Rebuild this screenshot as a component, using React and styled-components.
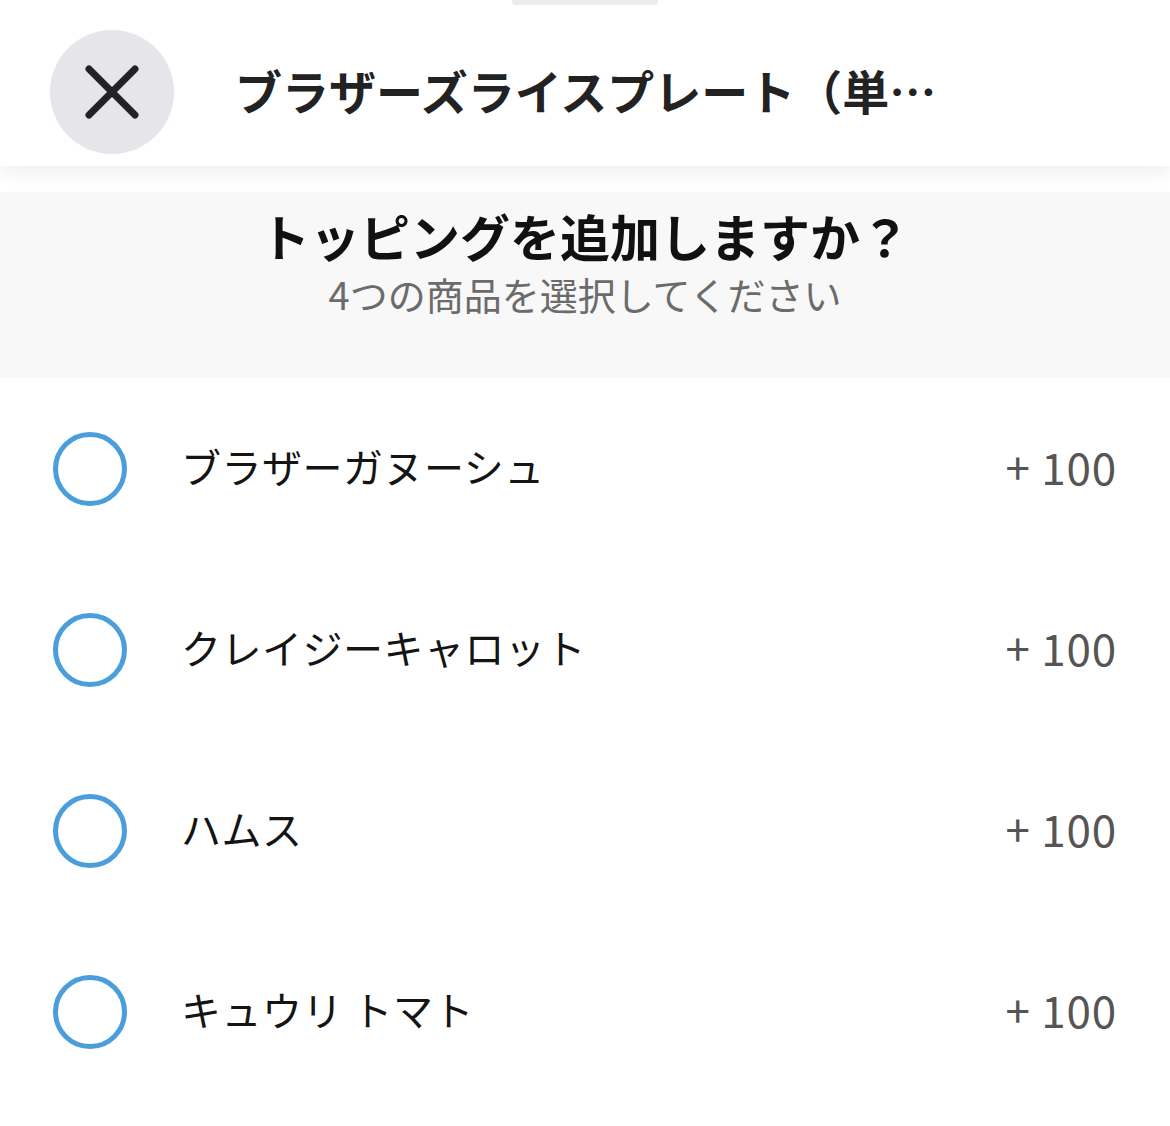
import React from 'react';
import styled, { createGlobalStyle } from 'styled-components';

const GlobalStyle = createGlobalStyle`
  html, body {
    margin: 0;
    padding: 0;
    background: #ffffff;
  }
  body {
    font-family: "Noto Sans CJK JP", "Noto Sans", sans-serif;
    -webkit-font-smoothing: antialiased;
  }
`;

const TOPPINGS = [
  { name: 'ブラザーガヌーシュ', price: 100 },
  { name: 'クレイジーキャロット', price: 100 },
  { name: 'ハムス', price: 100 },
  { name: 'キュウリ トマト', price: 100 },
];

const Sheet = styled.div`
  width: 1170px;
  height: 1126px;
  overflow: hidden;
  background: #ffffff;
`;

const Header = styled.header`
  position: relative;
  z-index: 2;
  display: flex;
  flex-direction: column;
  background: #ffffff;
  height: 166px;
  box-shadow: 0 6px 18px rgba(0, 0, 0, 0.07);
`;

const Handle = styled.div`
  align-self: center;
  width: 146px;
  height: 5px;
  border-radius: 0 0 4px 4px;
  background: #ececee;
`;

const HeaderRow = styled.div`
  display: flex;
  align-items: center;
  gap: 61px;
  padding: 25px 50px 0;
`;

const CloseButton = styled.button`
  flex: none;
  width: 124px;
  height: 124px;
  border: none;
  border-radius: 50%;
  background: #e5e5ea;
  display: flex;
  align-items: center;
  justify-content: center;
  padding: 0;
  cursor: pointer;
`;

const Title = styled.h1`
  margin: 0 0 6px;
  font-size: 47px;
  font-weight: 700;
  color: #222222;
  white-space: nowrap;
`;

const Spacer = styled.div`
  height: 26px;
`;

const Prompt = styled.section`
  display: flex;
  flex-direction: column;
  align-items: center;
  background: #f8f8f8;
  height: 186px;
  box-sizing: border-box;
  padding-top: 14px;
`;

const PromptTitle = styled.h2`
  margin: 0;
  font-size: 50px;
  line-height: 58px;
  font-weight: 700;
  color: #111111;
`;

const PromptSub = styled.p`
  margin: 7px 0 0;
  font-size: 38px;
  line-height: 46px;
  font-weight: 400;
  color: #6b6b6b;
`;

const List = styled.ul`
  list-style: none;
  margin: 0;
  padding: 0;
`;

const Row = styled.li`
  display: flex;
  align-items: center;
  height: 181px;
  padding: 0 53px;
`;

const Radio = styled.span`
  flex: none;
  width: 74px;
  height: 74px;
  box-sizing: border-box;
  border-radius: 50%;
  border: 5px solid #4a9edb;
  background: ${p => (p.checked ? '#4a9edb' : 'transparent')};
`;

const ItemName = styled.span`
  flex: 1;
  margin-left: 54px;
  padding-bottom: 6px;
  font-size: 40px;
  color: #141414;
  letter-spacing: 0.5px;
`;

const Price = styled.span`
  padding-bottom: 6px;
  font-size: 44px;
  letter-spacing: 0.8px;
  color: #555555;
`;

const CloseIcon = () => (
  <svg width="56" height="56" viewBox="0 0 56 56">
    <path
      d="M5 5 L51 51 M51 5 L5 51"
      stroke="#232323"
      strokeWidth="7"
      strokeLinecap="round"
    />
  </svg>
);

export default function App() {
  return (
    <>
      <GlobalStyle />
      <Sheet>
        <Header>
          <Handle />
          <HeaderRow>
            <CloseButton aria-label="閉じる">
              <CloseIcon />
            </CloseButton>
            <Title>ブラザーズライスプレート（単…</Title>
          </HeaderRow>
        </Header>
        <Spacer />
        <Prompt>
          <PromptTitle>トッピングを追加しますか？</PromptTitle>
          <PromptSub>4つの商品を選択してください</PromptSub>
        </Prompt>
        <List>
          {TOPPINGS.map(t => (
            <Row key={t.name}>
              <Radio />
              <ItemName>{t.name}</ItemName>
              <Price>+ {t.price}</Price>
            </Row>
          ))}
        </List>
      </Sheet>
    </>
  );
}
